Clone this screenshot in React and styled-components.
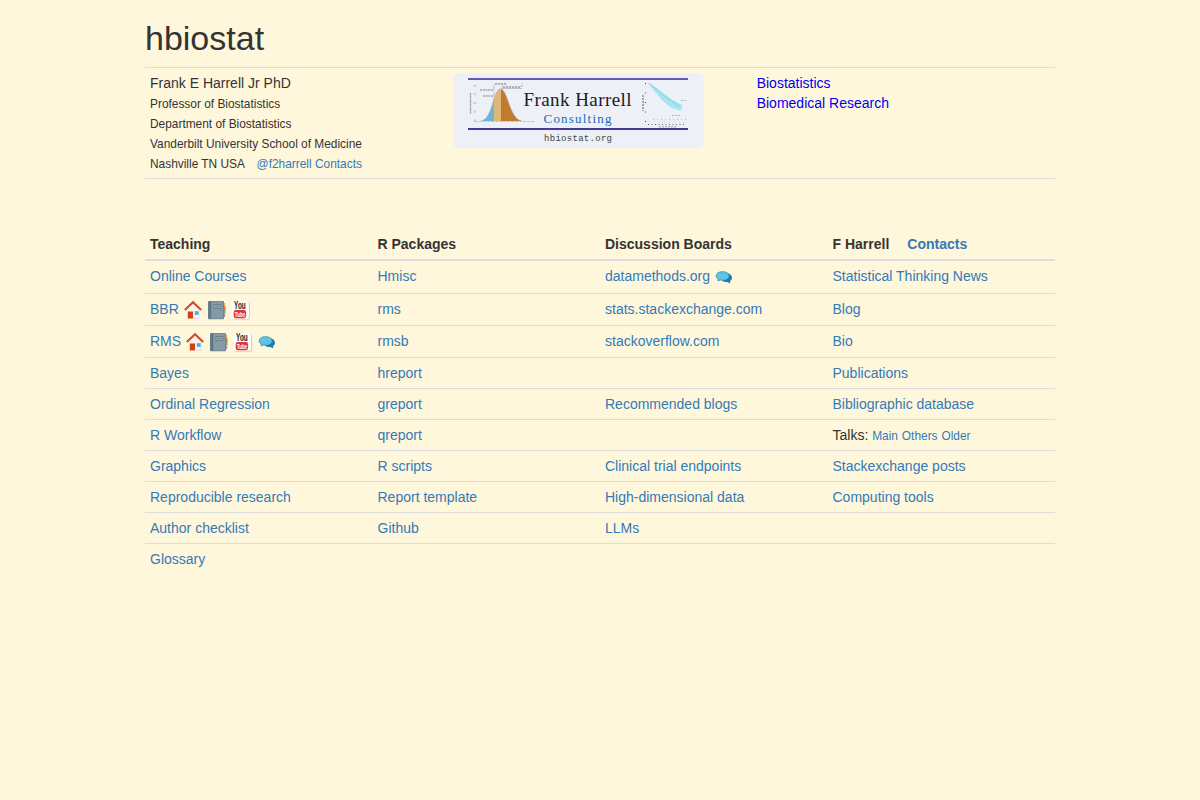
import React from "react";
import styled, { createGlobalStyle } from "styled-components";

const GlobalStyle = createGlobalStyle`
  * {
    box-sizing: border-box;
  }
  body {
    margin: 0;
    background-color: #fff7dc;
    color: #333;
    font-family: "Liberation Sans", Arial, sans-serif;
    font-size: 14px;
    line-height: 20px;
  }
`;

const Page = styled.main`
  width: 910px;
  margin: 0 auto;
  padding-top: 20px;
`;

const Title = styled.h1`
  height: 37px;
  margin: 0 0 10px;
  font-size: 34px;
  line-height: 37px;
  font-weight: 500;
`;

const Intro = styled.section`
  display: grid;
  grid-template-columns: repeat(3, 1fr);
  height: 112px;
  border-top: 1px solid #ddd;
  border-bottom: 1px solid #ddd;
`;

const IntroCell = styled.div`
  padding: 5px;
`;

const Line = styled.div`
  height: 20px;
  white-space: pre;
`;

const Small = styled.small`
  font-size: 85%;
`;

const Link = styled.a`
  color: ${(props) => (props.$plain ? "#0000ee" : "#337ab7")};
  text-decoration: none;
`;

const Table = styled.section`
  margin-top: 50px;
`;

const Row = styled.div`
  display: grid;
  grid-template-columns: repeat(4, 1fr);
  height: ${(props) => (props.$tall ? "32px" : "31px")};
  padding-top: 5px;
  border-top: 1px solid #ddd;
`;

const HeadRow = styled(Row)`
  height: 30px;
  border-top: 0;
  font-weight: bold;
`;

const FirstRow = styled(Row)`
  height: 34px;
  border-top-width: 2px;
`;

const Cell = styled.div`
  display: flex;
  align-items: center;
  height: 20px;
  padding: 0 5px;
  white-space: pre;
`;

const ContactLink = styled(Link)`
  margin-left: 18px;
`;

const Icons = styled.span`
  display: flex;
  align-items: center;
  gap: 4px;
  margin-left: 4px;
  padding-top: 2px;
`;

const IconSvg = styled.svg`
  display: block;
  width: 20px;
  height: 20px;
  overflow: visible;
`;

const Logo = styled.svg`
  display: block;
`;

const HouseIcon = () => (
  <IconSvg viewBox="0 0 20 20">
    <path d="M4 10 10 4l6 6v8.5H4z" fill="#f6f4ee" />
    <path d="M10 18.5h6V10" fill="none" stroke="#d9dad8" strokeWidth=".7" />
    <path d="M1.8 10 10 2.2l8.2 7.8" fill="none" stroke="#d24a24" strokeWidth="2" />
    <path d="M4.8 11.5H10v7H4.8z" fill="#d0430f" />
    <path d="M11.8 11.2h3.8v3.6h-3.8z" fill="#42aee5" />
  </IconSvg>
);

const BookIcon = () => (
  <IconSvg viewBox="0 0 20 20">
    <path d="M15 3h3.2v3.5H15z" fill="#e0b04a" />
    <path d="M15 6.5h3.6v3.5H15z" fill="#e06a62" />
    <path d="M15 10h3.6v3.5H15z" fill="#7bb661" />
    <path d="M15 13.5h3.2V17H15z" fill="#b983c0" />
    <rect x="1" y="1" width="16" height="18.2" rx="1" fill="#667d89" />
    <path d="M4 1.5h12.3v17H4z" fill="#849aa5" />
    <path d="M3.7 1.5v17" stroke="#566c78" strokeWidth=".8" />
    <path d="M7 4.5h7v4H7zM8.7 6.5h3.6" fill="#92a7b1" stroke="#637a86" strokeWidth=".8" />
  </IconSvg>
);

const YouTubeIcon = () => (
  <IconSvg viewBox="0 0 20 20">
    <rect x="1.5" y="1.5" width="17.5" height="18.2" rx="2" fill="#d8cfbd" />
    <rect x=".8" y=".8" width="17.2" height="18" rx="2" fill="#fffdf8" />
    <rect x="2.7" y="10" width="12.4" height="8.2" rx="2.2" fill="#e8303a" />
    <text transform="translate(3.1 9.4) scale(.64 1)" fill="#333" stroke="#333" strokeWidth=".2" fontFamily="Liberation Sans" fontSize="10" fontWeight="bold">You</text>
    <text transform="translate(3.8 16.9) scale(.57 1)" fill="#fff" fontFamily="Liberation Sans" fontSize="8" fontWeight="bold">Tube</text>
  </IconSvg>
);

const ChatIcon = () => (
  <IconSvg viewBox="0 0 20 20">
    <path d="M10 7c3-2 8 0 8 3.7 0 1.6-.8 2.7-2 3.5l.2 2.4-2.8-1.6C9.4 15.7 7 13 7 11z" fill="#187eb1" />
    <path d="M8.5 4.7c4 0 6.5 1.8 6.5 4.3s-2.5 4.3-6.3 4.3q-1.3 0-2.5-.4L4 14l.3-2C2.9 11.2 2.2 10.3 2.2 9c0-2.5 2.3-4.3 6.3-4.3z" fill="#60c3e4" stroke="#328fb0" strokeWidth=".8" />
  </IconSvg>
);

const ConsultingLogo = () => (
  <Logo width="251" height="75" viewBox="0 0 251 75">
    <defs>
      <clipPath id="bell">
        <path d="M28 48C40 46 40 16 47.5 16S56 46 69 48z" />
      </clipPath>
    </defs>
    <rect width="251" height="75" rx="6" fill="#edf0f6" />
    <path d="M15 6h220" stroke="#6259aa" strokeWidth="2" />
    <path d="M15 56h220" stroke="#443c98" strokeWidth="2" />
    <g fill="none" stroke="#a5a8aa" strokeWidth=".6">
      <path d="M20 12.5h2M20 21h2M20 30h2M20 39h2M20 48h2M22 48.5h60" strokeDasharray="3 1" />
      <path d="M17.5 20v21" stroke="#888" strokeWidth="1.3" strokeDasharray="1 .6" />
      <path d="M22.5 12v36" strokeDasharray="2 6.5" />
      <path d="M27 17h13M30 23h11" stroke="#777" strokeWidth=".9" strokeDasharray="2 .7" />
      <path d="M41 12v16M41 11.5h13M48 13.5h21v-3M48 15.5h21" />
      <path d="M42 10.5h12M50 14.5h17" stroke="#777" strokeDasharray="2 1" />
    </g>
    <g clipPath="url(#bell)">
      <path d="M26 15h15v34H26z" fill="#6db5d6" />
      <path d="M41 15h7v34h-7z" fill="#dfb777" />
      <path d="M48 15h22v34H48z" fill="#c17b2c" />
    </g>
    <path d="M28 48C40 46 40 16 47.5 16S56 46 69 48" fill="none" stroke="#9aa6a3" strokeWidth=".5" />
    <text x="70.5" y="33" fill="#1b1b2b" fontFamily="Liberation Serif" fontSize="19" textLength="108">Frank Harrell</text>
    <text x="90.5" y="50" fill="#226bb1" fontFamily="Liberation Serif" fontSize="13" textLength="68">Consulting</text>
    <text x="91" y="68" fill="#444" fontFamily="Liberation Mono" fontSize="9" textLength="68">hbiostat.org</text>
    <path d="M194.7 9.5 205 16l13.7 10.5 10.8 5.8-1.5 5.5-9.3-3-10-8z" fill="#a8e6ef" />
    <path d="M196 10.5 210 22l17 12" fill="none" stroke="#86dae6" strokeWidth="1.2" />
    <g fill="none">
      <path d="M190 22v16" stroke="#888" strokeWidth="1.4" strokeDasharray="2 1" />
      <path d="M192.5 10v40" stroke="#555" strokeDasharray="1 8.5" />
      <path d="M195 51.5h38" stroke="#666" strokeDasharray="1 2.5" />
      <path d="M200 46.5h34" stroke="#b8b9c1" strokeDasharray="1 3" />
      <path d="M196 49h36" stroke="#cfd1d9" strokeDasharray="1 4" />
      <path d="M206 53.8h17" stroke="#888" strokeWidth=".8" strokeDasharray="2 1" />
      <path d="m196 14 23 21" stroke="#aebcca" strokeWidth=".7" strokeDasharray="1 3" />
      <path d="M219 42.5h8M228 27.5h5" stroke="#8acfda" strokeDasharray="2 1" />
    </g>
  </Logo>
);

const icons = {
  house: HouseIcon,
  book: BookIcon,
  youtube: YouTubeIcon,
  chat: ChatIcon,
};

const rows = [
  ["BBR", "rms", "stats.stackexchange.com", "Blog"],
  ["RMS", "rmsb", "stackoverflow.com", "Bio"],
  ["Bayes", "hreport", "", "Publications"],
  ["Ordinal Regression", "greport", "Recommended blogs", "Bibliographic database"],
  ["R Workflow", "qreport", "", "Talks"],
  ["Graphics", "R scripts", "Clinical trial endpoints", "Stackexchange posts"],
  ["Reproducible research", "Report template", "High-dimensional data", "Computing tools"],
  ["Author checklist", "Github", "LLMs", ""],
  ["Glossary", "", "", ""],
];

const linkIcons = {
  BBR: ["house", "book", "youtube"],
  RMS: ["house", "book", "youtube", "chat"],
  "datamethods.org": ["chat"],
};

const LinkCell = ({ label }) => {
  if (label === "Talks") {
    return (
      <Cell>
        <span>
          Talks: <Small><Link>Main</Link></Small> <Small><Link>Others</Link></Small>{" "}
          <Small><Link>Older</Link></Small>
        </span>
      </Cell>
    );
  }
  return (
    <Cell>
      <Link>{label}</Link>
      {linkIcons[label] && (
        <Icons>
          {linkIcons[label].map((name) => {
            const Icon = icons[name];
            return <Icon key={name} />;
          })}
        </Icons>
      )}
    </Cell>
  );
};

const App = () => (
  <>
    <GlobalStyle />
    <Page>
      <Title>hbiostat</Title>
      <Intro>
        <IntroCell>
          <Line>Frank E Harrell Jr PhD</Line>
          <Line><Small>Professor of Biostatistics</Small></Line>
          <Line><Small>Department of Biostatistics</Small></Line>
          <Line><Small>Vanderbilt University School of Medicine</Small></Line>
          <Line>
            <Small>Nashville TN USA</Small>
            {" \u00a0 "}
            <Small><Link>@f2harrell</Link> <Link>Contacts</Link></Small>
          </Line>
        </IntroCell>
        <IntroCell>
          <ConsultingLogo />
        </IntroCell>
        <IntroCell>
          <Line><Link $plain>Biostatistics</Link></Line>
          <Line><Link $plain>Biomedical Research</Link></Line>
        </IntroCell>
      </Intro>
      <Table>
        <HeadRow>
          <Cell>Teaching</Cell>
          <Cell>R Packages</Cell>
          <Cell>Discussion Boards</Cell>
          <Cell>F Harrell<ContactLink>Contacts</ContactLink></Cell>
        </HeadRow>
        <FirstRow>
          <LinkCell label="Online Courses" />
          <LinkCell label="Hmisc" />
          <LinkCell label="datamethods.org" />
          <LinkCell label="Statistical Thinking News" />
        </FirstRow>
        {rows.map((row, index) => (
          <Row key={row[0]} $tall={index < 2}>
            {row.map((label, column) => (
              <LinkCell key={column} label={label} />
            ))}
          </Row>
        ))}
      </Table>
    </Page>
  </>
);

export default App;
